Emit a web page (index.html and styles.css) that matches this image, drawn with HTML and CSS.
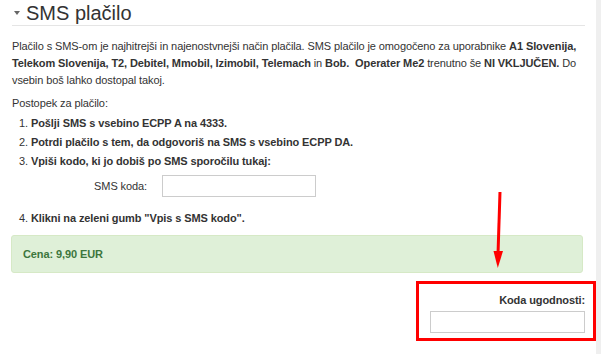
FILE: index.html
```html
<!DOCTYPE html>
<html lang="sl">
<head>
    <meta charset="UTF-8">
    <title>SMS plačilo</title>
    <link rel="stylesheet" href="styles.css">
</head>
<body>

<div class="layout">
    <div class="panel">
        <h2 class="panel-title"><span class="caret"></span>SMS plačilo</h2>

        <p class="intro">Plačilo s SMS-om je najhitrejši in najenostvnejši način plačila. SMS plačilo je omogočeno za uporabnike <b>A1 Slovenija, Telekom Slovenija, T2, Debitel, Mmobil, Izimobil, Telemach</b> in <b>Bob.</b>&nbsp; <b>Operater Me2</b> trenutno še <b>NI VKLJUČEN.</b> Do vsebin boš lahko dostopal takoj.</p>

        <p class="steps-title">Postopek za plačilo:</p>

        <ol class="steps">
            <li><b>Pošlji SMS s vsebino ECPP A na 4333.</b></li>
            <li><b>Potrdi plačilo s tem, da odgovoriš na SMS s vsebino ECPP DA.</b></li>
            <li>
                <b>Vpiši kodo, ki jo dobiš po SMS sporočilu tukaj:</b>
                <div class="sms-row">
                    <label class="sms-label" for="sms-code">SMS koda:</label>
                    <input type="text" id="sms-code" class="field sms-field">
                </div>
            </li>
            <li class="last-step"><b>Klikni na zeleni gumb "Vpis s SMS kodo".</b></li>
        </ol>

        <div class="price-box">Cena: 9,90 EUR</div>

        <div class="promo">
            <label class="promo-label" for="promo-code">Koda ugodnosti:</label>
            <input type="text" id="promo-code" class="field promo-field">
        </div>

        <!-- annotation drawn over the screenshot -->
        <svg class="arrow" width="20" height="85" viewBox="0 0 20 85">
            <line x1="10" y1="4" x2="8" y2="66" stroke="#ff0000" stroke-width="3"/>
            <polygon points="3.5,63 13,63 7.8,80" fill="#ff0000"/>
        </svg>
        <div class="highlight"></div>
    </div>
    <div class="side-strip"></div>
</div>

</body>
</html>
```

FILE: styles.css
```css
* {
    box-sizing: border-box;
}

body {
    margin: 0;
    background: #fff;
    color: #333;
    font-family: "Liberation Sans", Arial, sans-serif;
    font-size: 11px;
    letter-spacing: -0.1px;
    line-height: 17px;
}

.layout {
    display: flex;
    min-height: 354px;
}

.panel {
    position: relative;
    flex: 0 0 596px;
    padding: 0 11px 0 12px;
}

.side-strip {
    flex: 1;
    background: #efefef;
}

/* Header */
.panel-title {
    margin: 0;
    padding-top: 1px;
    font-size: 20px;
    font-weight: normal;
    letter-spacing: 0;
    line-height: 24px;
    border-bottom: 1px solid #e5e5e5;
    display: flex;
    align-items: center;
}

.caret {
    width: 0;
    height: 0;
    margin: 0 6px 0 2px;
    border-left: 3.5px solid transparent;
    border-right: 3.5px solid transparent;
    border-top: 4px solid #666;
}

.intro {
    margin: 12px 0 0;
}

.steps-title {
    margin: 6px 0 0;
}

/* Steps */
.steps {
    margin: 2px 0 0;
    padding-left: 19px;
    line-height: 19px;
}

.sms-row {
    display: flex;
    align-items: center;
    margin: 4px 0 0 -19px;
}

.sms-label {
    width: 135px;
    text-align: right;
    margin-right: 15px;
}

.field {
    height: 22px;
    border: 1px solid #ccc;
    background: #fff;
    padding: 2px 6px;
    font: inherit;
    border-radius: 0;
}

.sms-field {
    width: 154px;
}

.last-step {
    margin-top: 12px;
}

/* Price */
.price-box {
    margin: 7px 2px 0 -1px;
    padding: 10px 11px;
    background: #dff0d8;
    border: 1px solid #d6e9c6;
    border-radius: 3px;
    color: #3c763d;
    font-weight: bold;
    line-height: 16px;
}

/* Promo code */
.promo {
    margin-top: 19px;
    display: flex;
    flex-direction: column;
    align-items: flex-end;
}

.promo-label {
    font-weight: bold;
}

.promo-field {
    margin-top: 2px;
    width: 155px;
}

/* Annotations */
.arrow {
    position: absolute;
    left: 490px;
    top: 188px;
}

.highlight {
    position: absolute;
    left: 416px;
    top: 281px;
    width: 180px;
    height: 60px;
    border: 3px solid #ff0000;
}
```
